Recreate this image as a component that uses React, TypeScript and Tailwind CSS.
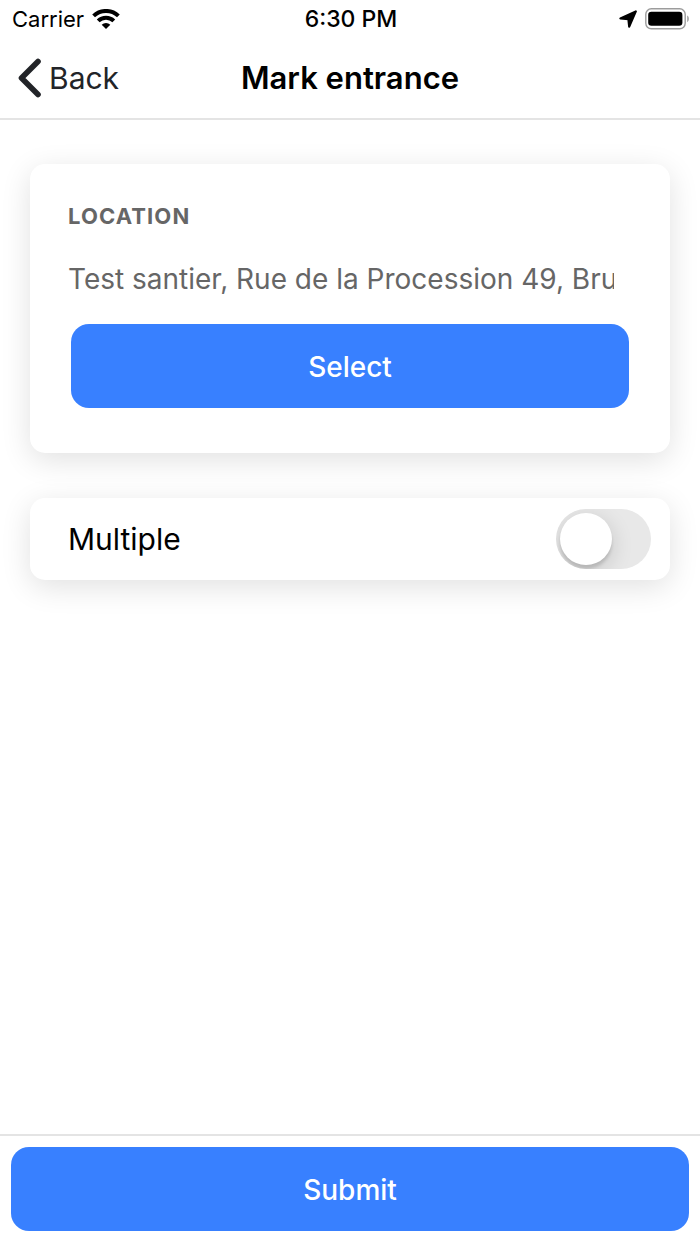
import { useState } from 'react';

function WifiIcon() {
  return (
    <svg viewBox="0 0 28 20" className="h-5 w-7" aria-hidden="true">
      <path
        d="M1.6 6.9a18 18 0 0 1 24.8 0M6.2 11.9a11.2 11.2 0 0 1 15.6 0"
        fill="none"
        stroke="#000"
        strokeWidth="4"
      />
      <path d="M9.7 15.8a6.3 6.3 0 0 1 8.6 0L14 20z" fill="#000" />
    </svg>
  );
}

function LocationArrow() {
  return (
    <svg viewBox="0 0 18 18" className="h-[18px] w-[18px]" aria-hidden="true">
      <path d="M16.8 1.4 1.4 8.4 9.4 9.2 10.2 16.6z" fill="#000" stroke="#000" strokeWidth="2.2" strokeLinejoin="round" />
    </svg>
  );
}

function BatteryIcon() {
  return (
    <svg viewBox="0 0 45 22" className="h-[22px] w-[45px]" aria-hidden="true">
      <rect x="0.8" y="0.8" width="39.4" height="20" rx="5.5" fill="none" stroke="#9c9c9c" strokeWidth="1.4" />
      <rect x="3.2" y="3.8" width="34.2" height="14" rx="3.2" fill="#000" />
      <path d="M42.3 7.6c1.9 1 1.9 5.6 0 6.6z" fill="#8c8c8c" />
    </svg>
  );
}

export default function App() {
  const [multiple, setMultiple] = useState(false);
  const [location, setLocation] = useState('Test santier, Rue de la Procession 49, Bruxelles');

  return (
    <div className="flex min-h-screen flex-col bg-white font-['Inter','Liberation_Sans',sans-serif] text-black">
      <header className="border-b-2 border-[#e4e4e4]">
        <div className="grid h-[38px] grid-cols-3 items-center pr-[10px] pl-3 text-[22px] leading-7">
          <div className="flex items-center gap-2">
            <span>Carrier</span>
            <WifiIcon />
          </div>
          <span className="text-center text-[23px] font-medium">6:30 PM</span>
          <div className="flex items-center justify-end gap-2">
            <LocationArrow />
            <BatteryIcon />
          </div>
        </div>
        <div className="grid h-20 grid-cols-[1fr_auto_1fr] items-center px-[18px]">
          <button type="button" className="flex items-center gap-2 justify-self-start text-[30px] leading-10 text-[#222428]">
            <svg viewBox="0 0 23 40" className="h-10 w-[23px]" aria-hidden="true">
              <path
                d="M20 3.5 3.5 20 20 36.5"
                fill="none"
                stroke="#222428"
                strokeWidth="5.6"
                strokeLinecap="round"
                strokeLinejoin="round"
              />
            </svg>
            Back
          </button>
          <h1 className="text-[31px] leading-10 font-semibold">Mark entrance</h1>
        </div>
      </header>

      <main className="flex flex-1 flex-col gap-[45px] px-[30px] pt-11">
        <section className="rounded-[15px] bg-white px-[38px] pt-9 pb-[45px] shadow-[0_7px_30px_rgba(0,0,0,0.12)]">
          <label htmlFor="location" className="block text-[22px] leading-8 font-bold tracking-wider text-[#666666]">
            LOCATION
          </label>
          <div className="pt-6 pr-[18px]">
            <input
              id="location"
              type="text"
              value={location}
              onChange={(e) => setLocation(e.target.value)}
              className="block h-11 w-full bg-transparent pt-[2px] text-[28px] text-[#666666] outline-none"
            />
          </div>
          <div className="px-[3px] pt-6">
            <button type="button" className="h-[84px] w-full rounded-[18px] bg-[#3880ff] pt-[2px] text-[28px] font-medium text-white">
              Select
            </button>
          </div>
        </section>

        <section className="rounded-[15px] bg-white shadow-[0_7px_30px_rgba(0,0,0,0.12)]">
          <label className="flex h-[82px] items-center justify-between pr-[19px] pl-[38px] text-[30px]">
            Multiple
            <input
              type="checkbox"
              role="switch"
              checked={multiple}
              onChange={(e) => setMultiple(e.target.checked)}
              className="h-[60px] w-[95px] appearance-none overflow-hidden rounded-full bg-[#e8e8e8] p-1 before:block before:size-[52px] before:rounded-full before:bg-white before:shadow-[0_6px_22px_rgba(0,0,0,0.16),0_4px_3px_rgba(0,0,0,0.12)] checked:bg-[#3880ff] checked:before:ml-auto"
            />
          </label>
        </section>
      </main>

      <footer className="border-t-2 border-[#e4e4e4] px-[11px] pt-[11px] pb-[13px]">
        <button type="submit" className="block h-[84px] w-full rounded-[18px] bg-[#3880ff] pt-[2px] text-[28px] font-medium text-white">
          Submit
        </button>
      </footer>
    </div>
  );
}
